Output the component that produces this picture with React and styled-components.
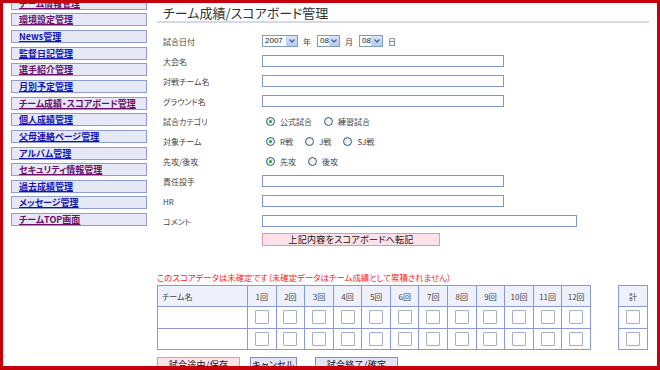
import React from "react";
import styled, { createGlobalStyle } from "styled-components";

const GlobalStyle = createGlobalStyle`
  html, body {
    margin: 0;
    padding: 0;
    background: #fff;
  }
  body {
    font-family: "Noto Sans CJK JP", "Liberation Sans", sans-serif;
    font-feature-settings: "palt";
  }
`;

const Frame = styled.div`
  width: 660px;
  height: 370px;
  box-sizing: border-box;
  border: 3px solid #c4000c;
  border-bottom-width: 4px;
  overflow: hidden;
  display: flex;
  align-items: flex-start;
  background: #fff;
`;

const Sidebar = styled.nav`
  width: 136px;
  flex-shrink: 0;
  margin: -6.4px 0 0 8px;
  display: flex;
  flex-direction: column;
  gap: 3.67px;
`;

const MenuButton = styled.a`
  height: 13px;
  box-sizing: border-box;
  border: 1px solid #8e9cd2;
  background: #e6e9f5;
  display: flex;
  align-items: center;
  padding-left: 7px;
  font-size: 9px;
  font-weight: bold;
  line-height: 1;
  white-space: nowrap;
  color: ${(p) => (p.$visited ? "#6b0f6b" : "#1414b4")};
  text-decoration: underline;
`;

const Main = styled.main`
  flex: 1;
  margin-left: 10px;
  padding-right: 8px;
  display: flex;
  flex-direction: column;
`;

const Title = styled.h1`
  margin: 0;
  height: 20px;
  box-sizing: border-box;
  padding: 2px 0 0 6px;
  font-size: 13px;
  line-height: 16px;
  font-weight: normal;
  color: #333;
  border-bottom: 2px solid #d2d9e8;
`;

const Form = styled.div`
  margin-top: 8px;
  display: flex;
  flex-direction: column;
`;

const Row = styled.div`
  height: 20px;
  display: grid;
  grid-template-columns: 105px 1fr;
  align-items: center;
`;

const Label = styled.span`
  padding-left: 6px;
  font-size: 8px;
  color: #444;
`;

const Field = styled.div`
  display: flex;
  align-items: center;
`;

const TextInput = styled.input`
  width: ${(p) => (p.$wide ? "315px" : "242px")};
  height: 12px;
  box-sizing: border-box;
  margin: 0;
  padding: 0 2px;
  border: 1px solid #7f95d0;
  background: #fff;
  font-size: 8px;
`;

const SelectBox = styled.span`
  width: ${(p) => p.$w}px;
  height: 12px;
  box-sizing: border-box;
  border: 1px solid #7f9db9;
  display: inline-flex;
  align-items: stretch;
  background: #fff;
`;

const SelectText = styled.span`
  flex: 1;
  font-family: "Liberation Sans", sans-serif;
  font-size: 8px;
  line-height: 10px;
  padding-left: 2px;
  color: #222;
`;

const SelectArrow = styled.span`
  width: 10px;
  background: linear-gradient(#dbe6fd, #b4c8f6);
  border-left: 1px solid #c3d3fd;
  display: flex;
  align-items: center;
  justify-content: center;
`;

const Unit = styled.span`
  font-size: 8px;
  color: #444;
  margin: 0 6px 0 5px;
`;

const RadioOption = styled.label`
  display: inline-flex;
  align-items: center;
  gap: 5px;
  margin-left: 4px;
  margin-right: 8px;
  font-size: 8px;
  color: #444;
`;

const RadioMark = styled.span`
  width: 9px;
  height: 9px;
  box-sizing: border-box;
  border-radius: 50%;
  border: 1px solid #2d5a87;
  background: radial-gradient(circle at 60% 60%, #ffffff, #dcdcd6);
  display: flex;
  align-items: center;
  justify-content: center;
  &::after {
    content: "";
    width: 3px;
    height: 3px;
    border-radius: 50%;
    background: ${(p) => (p.$checked ? "#21a121" : "transparent")};
  }
`;

const TransferRow = styled.div`
  margin-top: 2px;
  padding-left: 105px;
  display: flex;
`;

const PushButton = styled.button`
  height: ${(p) => p.$h || 13}px;
  width: ${(p) => p.$w}px;
  box-sizing: border-box;
  margin: 0;
  padding: 0;
  border: 1px solid ${(p) => (p.$pink ? "#e894ae" : "#7f8dc9")};
  background: ${(p) => (p.$pink ? "#fde1e9" : "#e2e5f4")};
  font-family: inherit;
  font-feature-settings: "palt";
  font-size: 9px;
  line-height: 1;
  color: #111;
  letter-spacing: 0.3px;
`;

const Note = styled.p`
  margin: 25px 0 0;
  font-size: 8.4px;
  line-height: 12px;
  color: #ff1a1a;
  white-space: nowrap;
`;

const Boards = styled.div`
  margin-top: 2px;
  display: flex;
  align-items: flex-start;
  gap: 27px;
`;

const Board = styled.table`
  border-collapse: collapse;
  table-layout: fixed;
  width: ${(p) => p.$w}px;
  border: 1px solid #8a9ad6;
`;

const HeadCell = styled.th`
  height: 20px;
  padding: 0;
  border: 1px solid #8a9ad6;
  background: #eef1fb;
  font-size: 8px;
  font-weight: normal;
  color: #444;
  text-align: ${(p) => (p.$left ? "left" : "center")};
  padding-left: ${(p) => (p.$left ? "4px" : "0")};
`;

const Cell = styled.td`
  height: 20.5px;
  padding: 0;
  border: 1px solid #8a9ad6;
  background: #fff;
  text-align: center;
  vertical-align: middle;
`;

const ScoreInput = styled.input`
  display: block;
  margin: 0 auto;
  width: 14px;
  height: 14px;
  box-sizing: border-box;
  padding: 0;
  border: 1px solid #a5afcb;
  border-radius: 1px;
  background: #fff;
`;

const ActionBar = styled.div`
  margin-top: 7px;
  display: flex;
  gap: 10px;
`;

const menu = [
  ["チーム情報管理", true],
  ["環境設定管理", true],
  ["News管理", false],
  ["監督日記管理", false],
  ["選手紹介管理", true],
  ["月別予定管理", false],
  ["チーム成績・スコアボード管理", true],
  ["個人成績管理", false],
  ["父母連絡ページ管理", false],
  ["アルバム管理", false],
  ["セキュリティ情報管理", true],
  ["過去成績管理", false],
  ["メッセージ管理", false],
  ["チームTOP画面", true],
];

const innings = Array.from({ length: 12 }, (_, i) => `${i + 1}回`);

const Arrow = () => (
  <svg width="6" height="4" viewBox="0 0 6 4">
    <path d="M0.5 0.5 L3 3 L5.5 0.5" fill="none" stroke="#4d6185" strokeWidth="1.3" />
  </svg>
);

const Select = ({ value, w }) => (
  <SelectBox $w={w}>
    <SelectText>{value}</SelectText>
    <SelectArrow>
      <Arrow />
    </SelectArrow>
  </SelectBox>
);

const Radio = ({ label, checked }) => (
  <RadioOption>
    <RadioMark $checked={checked} />
    {label}
  </RadioOption>
);

const App = () => {
  return (
    <>
      <GlobalStyle />
      <Frame>
        <Sidebar>
          {menu.map(([label, visited]) => (
            <MenuButton key={label} href="#" $visited={visited}>
              {label}
            </MenuButton>
          ))}
        </Sidebar>

        <Main>
          <Title>チーム成績/スコアボード管理</Title>

          <Form>
            <Row>
              <Label>試合日付</Label>
              <Field>
                <Select value="2007" w={36} />
                <Unit>年</Unit>
                <Select value="08" w={23} />
                <Unit>月</Unit>
                <Select value="08" w={24} />
                <Unit>日</Unit>
              </Field>
            </Row>
            <Row>
              <Label>大会名</Label>
              <Field><TextInput /></Field>
            </Row>
            <Row>
              <Label>対戦チーム名</Label>
              <Field><TextInput /></Field>
            </Row>
            <Row>
              <Label>グラウンド名</Label>
              <Field><TextInput /></Field>
            </Row>
            <Row>
              <Label>試合カテゴリ</Label>
              <Field>
                <Radio label="公式試合" checked />
                <Radio label="練習試合" />
              </Field>
            </Row>
            <Row>
              <Label>対象チーム</Label>
              <Field>
                <Radio label="R戦" checked />
                <Radio label="J戦" />
                <Radio label="SJ戦" />
              </Field>
            </Row>
            <Row>
              <Label>先攻/後攻</Label>
              <Field>
                <Radio label="先攻" checked />
                <Radio label="後攻" />
              </Field>
            </Row>
            <Row>
              <Label>責任投手</Label>
              <Field><TextInput /></Field>
            </Row>
            <Row>
              <Label>HR</Label>
              <Field><TextInput /></Field>
            </Row>
            <Row>
              <Label>コメント</Label>
              <Field><TextInput $wide /></Field>
            </Row>
          </Form>

          <TransferRow>
            <PushButton $pink $w={178}>上記内容をスコアボードへ転記</PushButton>
          </TransferRow>

          <Note>このスコアデータは未確定です（未確定データはチーム成績として累積されません）</Note>

          <Boards>
            <Board $w={434}>
              <colgroup>
                <col style={{ width: 90 }} />
                {innings.map((n) => (
                  <col key={n} />
                ))}
              </colgroup>
              <thead>
                <tr>
                  <HeadCell $left>チーム名</HeadCell>
                  {innings.map((n) => (
                    <HeadCell key={n}>{n}</HeadCell>
                  ))}
                </tr>
              </thead>
              <tbody>
                {[0, 1].map((r) => (
                  <tr key={r}>
                    <Cell />
                    {innings.map((n) => (
                      <Cell key={n}>
                        <ScoreInput />
                      </Cell>
                    ))}
                  </tr>
                ))}
              </tbody>
            </Board>

            <Board $w={30}>
              <thead>
                <tr>
                  <HeadCell>計</HeadCell>
                </tr>
              </thead>
              <tbody>
                {[0, 1].map((r) => (
                  <tr key={r}>
                    <Cell>
                      <ScoreInput />
                    </Cell>
                  </tr>
                ))}
              </tbody>
            </Board>
          </Boards>

          <ActionBar>
            <PushButton $pink $w={83} $h={15}>試合途中/保存</PushButton>
            <PushButton $w={47} $h={15}>キャンセル</PushButton>
            <PushButton $w={83} $h={15} style={{ marginLeft: 8 }}>試合終了/確定</PushButton>
          </ActionBar>
        </Main>
      </Frame>
    </>
  );
};

export default App;
